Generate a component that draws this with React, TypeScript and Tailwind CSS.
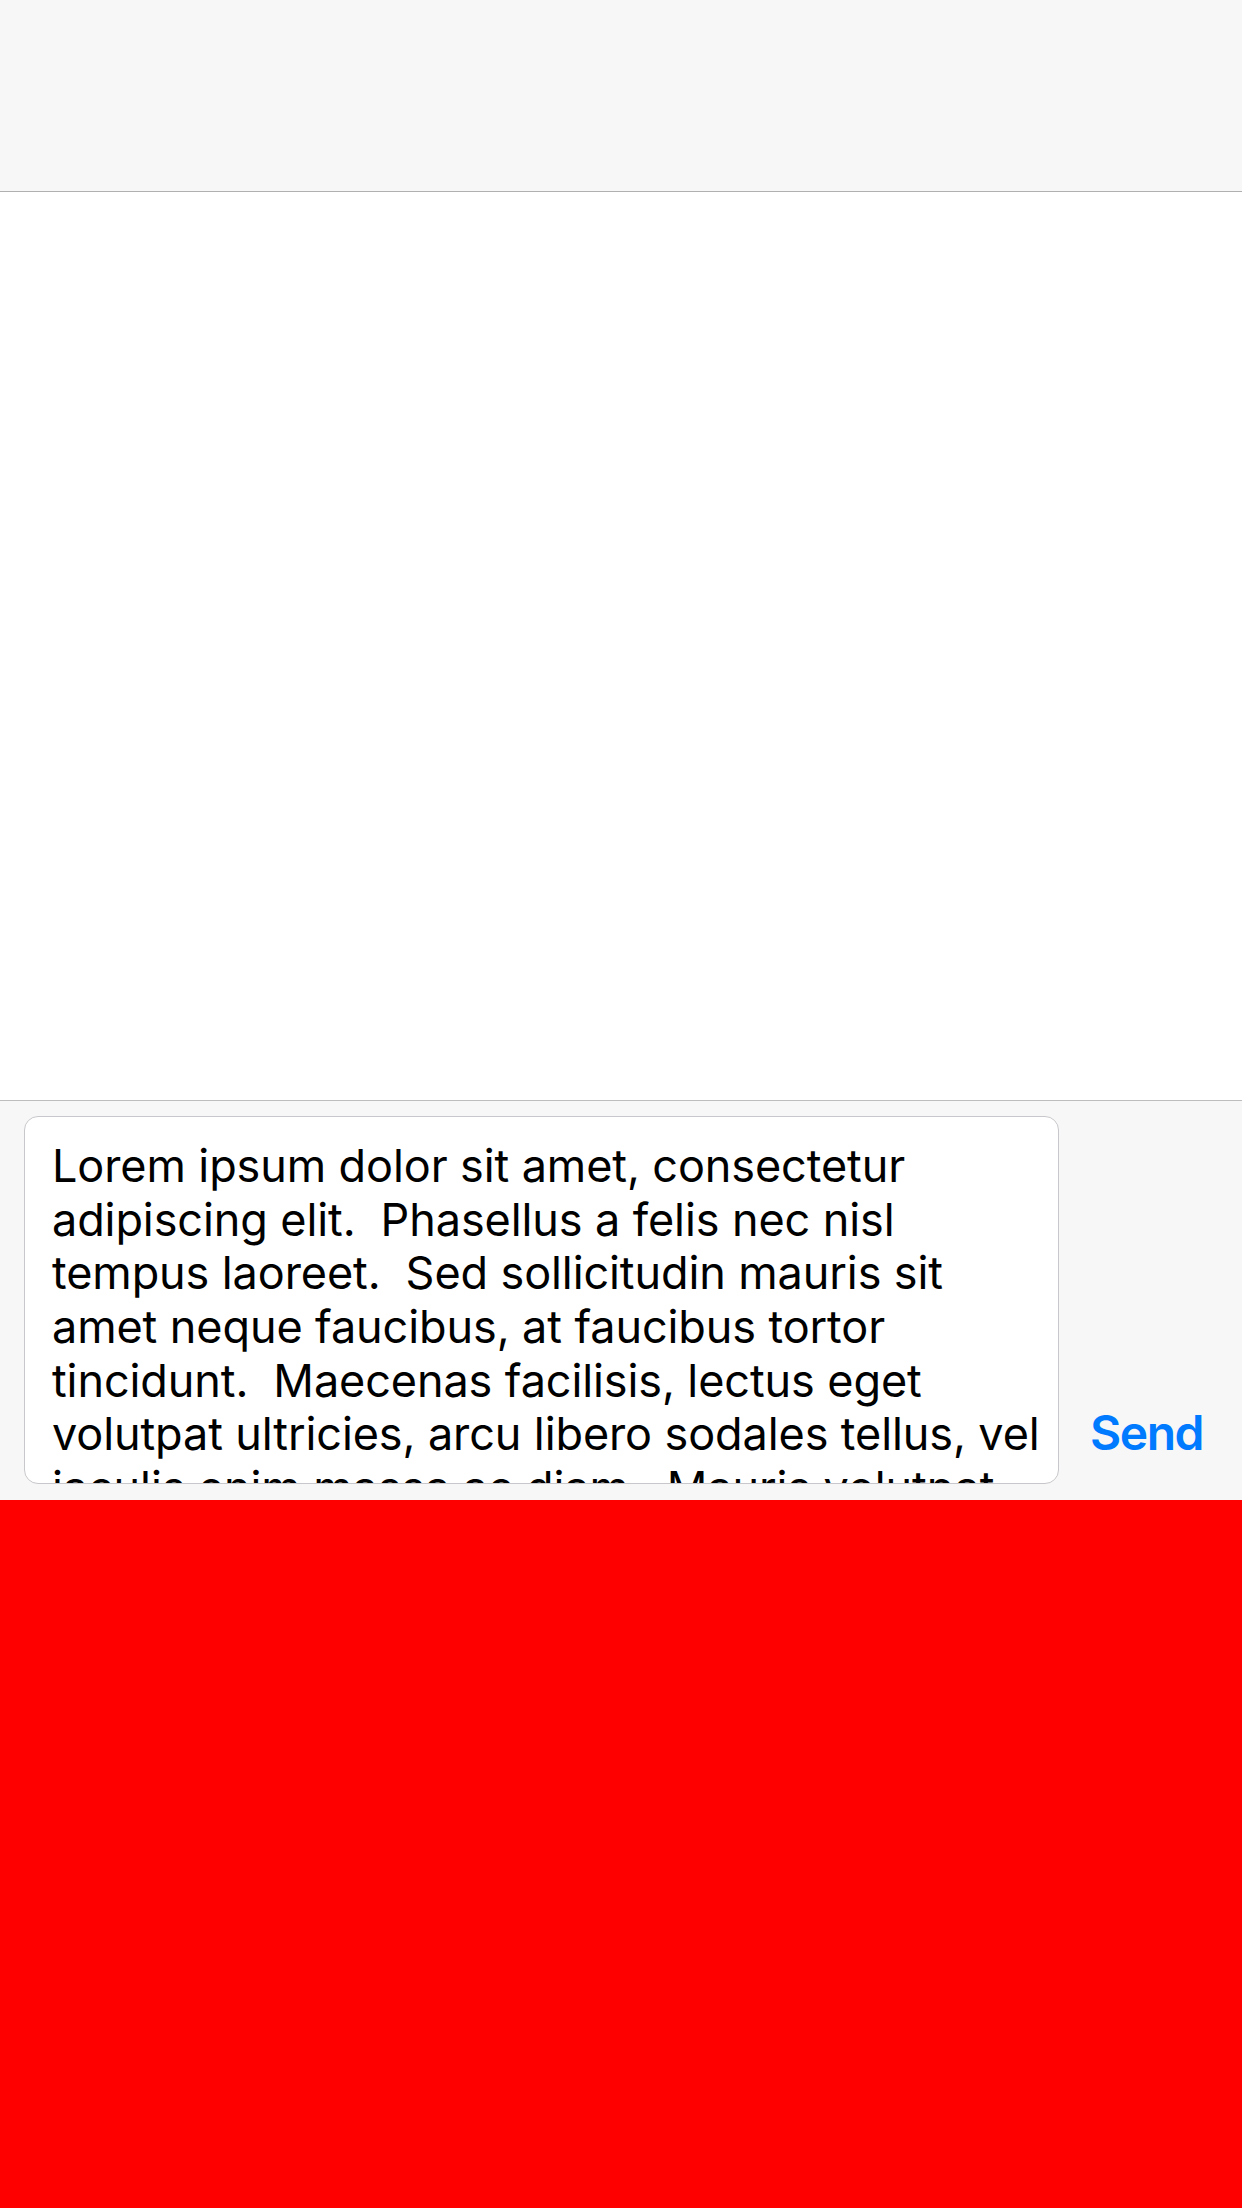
import React from "react";

const lines = [
  "Lorem ipsum dolor sit amet, consectetur",
  "adipiscing elit.  Phasellus a felis nec nisl",
  "tempus laoreet.  Sed sollicitudin mauris sit",
  "amet neque faucibus, at faucibus tortor",
  "tincidunt.  Maecenas facilisis, lectus eget",
  "volutpat ultricies, arcu libero sodales tellus, vel",
  "iaculis enim massa ac diam.  Mauris volutpat",
  "lorem at lectus faucibus, sit amet viverra",
];

export default function App() {
  return (
    <div className="flex h-[2208px] w-[1242px] flex-col bg-white" style={{ fontFamily: "Inter, 'Noto Sans', sans-serif" }}>
      <div className="h-[192px] shrink-0 border-b border-[#b0b0b0] bg-[#f7f7f7]" />
      <div className="h-[908px] shrink-0 bg-white" />
      <div className="flex h-[400px] shrink-0 items-end border-t border-[#bdbdbd] bg-[#f7f7f7] pb-[16px] pl-[24px] pr-[39px] pt-[15px]">
        <div className="h-[368px] w-[1035px] shrink-0 overflow-hidden rounded-[14px] border border-[#c8c8cc] bg-white pl-[27px] pt-[22px]">
          {lines.map((l, i) => (
            <div key={i} className="whitespace-pre text-[45px] leading-[53.67px] tracking-[-0.1px] text-black">
              {l}
            </div>
          ))}
        </div>
        <div className="ml-auto pb-[22px] text-[48px] font-semibold leading-[58px] tracking-[-1.5px] text-[#007aff]">Send</div>
      </div>
      <div className="h-[708px] shrink-0 bg-[#ff0000]" />
    </div>
  );
}
